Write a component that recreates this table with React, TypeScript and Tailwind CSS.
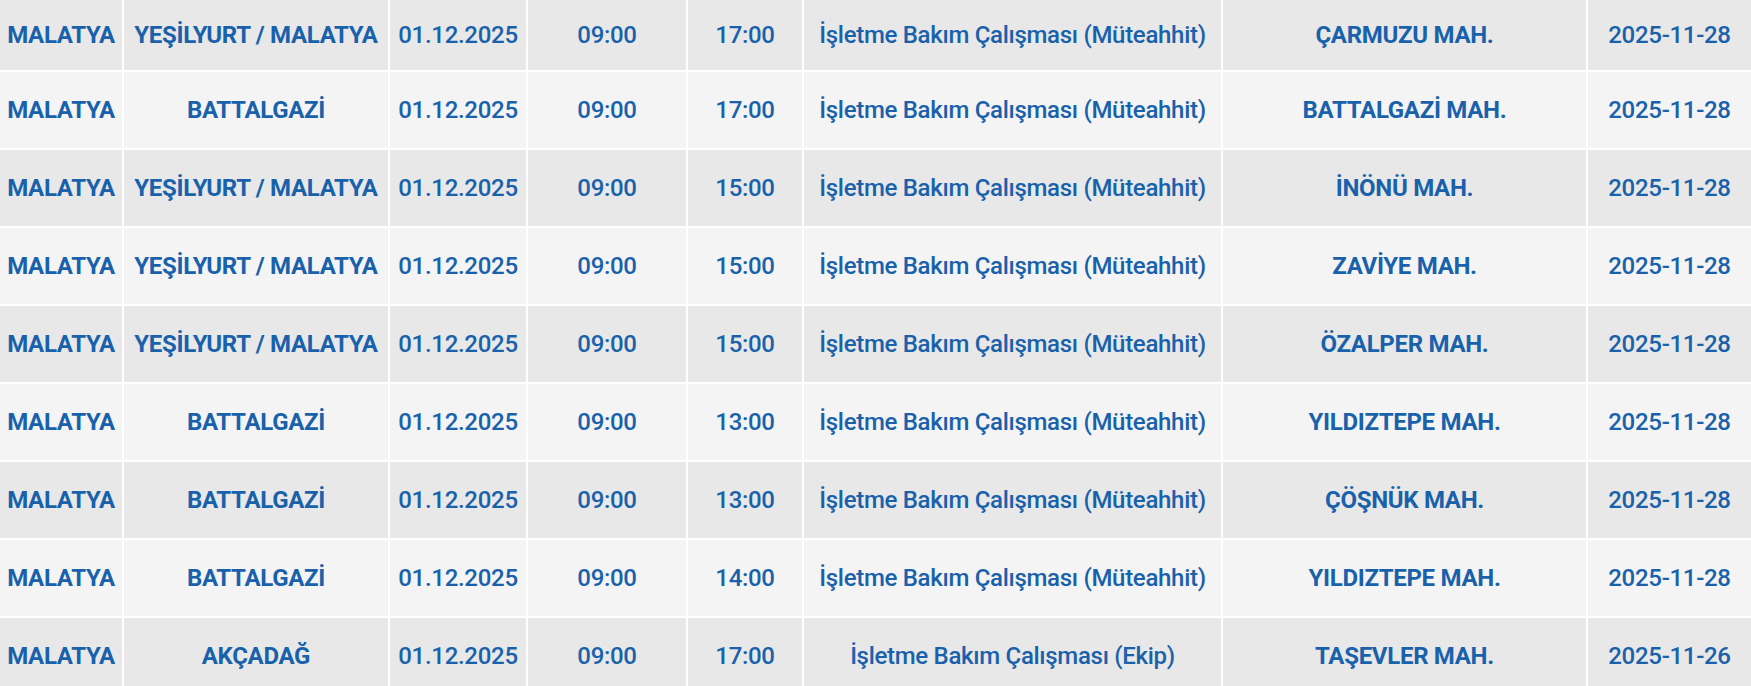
import React from "react";

type Row = [string, string, string, string, string, string, string, string];

const rows: Row[] = [
  ["MALATYA", "YEŞİLYURT / MALATYA", "01.12.2025", "09:00", "17:00", "İşletme Bakım Çalışması (Müteahhit)", "ÇARMUZU MAH.", "2025-11-28"],
  ["MALATYA", "BATTALGAZİ", "01.12.2025", "09:00", "17:00", "İşletme Bakım Çalışması (Müteahhit)", "BATTALGAZİ MAH.", "2025-11-28"],
  ["MALATYA", "YEŞİLYURT / MALATYA", "01.12.2025", "09:00", "15:00", "İşletme Bakım Çalışması (Müteahhit)", "İNÖNÜ MAH.", "2025-11-28"],
  ["MALATYA", "YEŞİLYURT / MALATYA", "01.12.2025", "09:00", "15:00", "İşletme Bakım Çalışması (Müteahhit)", "ZAVİYE MAH.", "2025-11-28"],
  ["MALATYA", "YEŞİLYURT / MALATYA", "01.12.2025", "09:00", "15:00", "İşletme Bakım Çalışması (Müteahhit)", "ÖZALPER MAH.", "2025-11-28"],
  ["MALATYA", "BATTALGAZİ", "01.12.2025", "09:00", "13:00", "İşletme Bakım Çalışması (Müteahhit)", "YILDIZTEPE MAH.", "2025-11-28"],
  ["MALATYA", "BATTALGAZİ", "01.12.2025", "09:00", "13:00", "İşletme Bakım Çalışması (Müteahhit)", "ÇÖŞNÜK MAH.", "2025-11-28"],
  ["MALATYA", "BATTALGAZİ", "01.12.2025", "09:00", "14:00", "İşletme Bakım Çalışması (Müteahhit)", "YILDIZTEPE MAH.", "2025-11-28"],
  ["MALATYA", "AKÇADAĞ", "01.12.2025", "09:00", "17:00", "İşletme Bakım Çalışması (Ekip)", "TAŞEVLER MAH.", "2025-11-26"],
];

const boldCols = new Set([0, 1, 6]);

export default function App() {
  return (
    <div
      className="w-[1751px] h-[686px] overflow-hidden bg-white text-[#1961ab]"
      style={{ fontFamily: "Roboto, 'Noto Sans', sans-serif" }}
    >
      {rows.map((r, i) => (
        <div
          key={i}
          className={`grid grid-cols-[124px_266px_138px_160px_116px_419px_365px_163px] border-b-2 border-white ${
            i === 0 ? "h-[72px]" : "h-[78px]"
          } ${i % 2 === 0 ? "bg-[#e8e8e8]" : "bg-[#f4f4f4]"}`}
        >
          {r.map((c, j) => (
            <div
              key={j}
              className={`flex items-center justify-center text-center text-[24px] leading-none tracking-[-0.3px] whitespace-nowrap ${
                j < 7 ? "border-r-2 border-white" : ""
              } ${boldCols.has(j) ? "font-bold" : "font-medium"}`}
            >
              {c}
            </div>
          ))}
        </div>
      ))}
    </div>
  );
}
